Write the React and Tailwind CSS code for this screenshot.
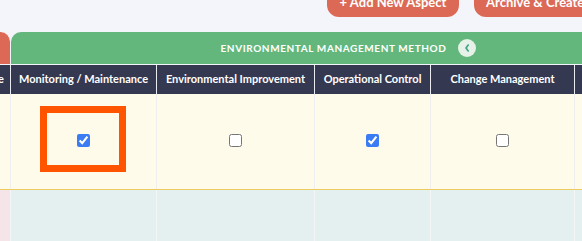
const columns = [
  { label: 'Type', width: 'w-[11px]', checked: null },
  { label: 'Monitoring / Maintenance', width: 'w-[146px]', checked: true, marked: true },
  { label: 'Environmental Improvement', width: 'w-[158px]', checked: false },
  { label: 'Operational Control', width: 'w-[116px]', checked: true },
  { label: 'Change Management', width: 'w-[144px]', checked: false },
  { label: '', width: 'w-[120px]', checked: null },
];

function Chevron() {
  return (
    <svg width="8" height="10" viewBox="0 0 8 10" fill="none">
      <path d="M5.2 2 L3 5 L5.2 8" stroke="#3f9f86" strokeWidth="1.6" strokeLinecap="round" strokeLinejoin="round" />
    </svg>
  );
}

export default function App() {
  return (
    <div className="w-[582px] h-[241px] overflow-hidden bg-[#f4f5fb] font-['Lato',sans-serif]">
      {/* action buttons */}
      <div className="h-[32px] pb-[15px] pl-[327px] flex items-end gap-[15px] whitespace-nowrap">
        <button className="h-[30px] w-[132px] shrink-0 rounded-[12px] bg-[#db6955] text-white text-[13px] font-bold leading-[18px]">
          + Add New Aspect
        </button>
        <button className="h-[30px] shrink-0 px-3 rounded-[12px] bg-[#db6955] text-white text-[13px] font-bold leading-[18px]">
          Archive &amp; Create New
        </button>
      </div>

      {/* group header */}
      <div className="flex h-[33px] border-b border-[#f4f5fb] w-[800px]">
        <div className="w-[11px] shrink-0 bg-[#db6955] rounded-tr-[10px] border-r border-[#f4f5fb]" />
        <div className="w-[674px] shrink-0 bg-[#63b77c] rounded-tl-[10px] flex items-center justify-center gap-[11px]">
          <span className="text-white text-[10px] font-bold tracking-[0.6px] uppercase">
            Environmental Management Method
          </span>
          <span className="w-[18px] h-[18px] rounded-full bg-[#e6f1e7] flex items-center justify-center">
            <Chevron />
          </span>
        </div>
        <div className="flex-1 bg-[#63b77c]" />
      </div>

      {/* column header */}
      <div className="flex h-[29px] w-[800px] bg-[#343851]">
        {columns.map(function (col, i) {
          return (
            <div
              key={i}
              className={`${col.width} shrink-0 h-full border-r border-[#e9eaf0] flex items-center overflow-hidden whitespace-nowrap ${i === 0 ? 'justify-end pr-[6px]' : 'justify-center'}`}
            >
              <span className="text-white text-[11px] font-bold">{col.label}</span>
            </div>
          );
        })}
      </div>

      {/* first row */}
      <div className="flex h-[96px] w-[800px] bg-[#fffbea] border-b border-[#eecb60]">
        {columns.map(function (col, i) {
          return (
            <div
              key={i}
              className={`${col.width} shrink-0 h-full border-r border-[#efefef] relative flex justify-center pt-[40px]`}
            >
              {col.checked !== null && (
                <input type="checkbox" defaultChecked={col.checked} className="accent-[#3b7cf4] w-[13px] h-[13px]" />
              )}
              {col.marked && (
                <div className="absolute left-[29px] top-[12px] w-[86px] h-[66px] border-[7px] border-[#ff5500]" />
              )}
            </div>
          );
        })}
      </div>

      {/* second row */}
      <div className="flex h-[60px] w-[800px] bg-[#e4f0f0]">
        {columns.map(function (col, i) {
          return (
            <div
              key={i}
              className={`${col.width} shrink-0 h-full border-r border-[#f4f6f6] ${i === 0 ? 'bg-[#f5e4e8]' : ''}`}
            />
          );
        })}
      </div>
    </div>
  );
}
